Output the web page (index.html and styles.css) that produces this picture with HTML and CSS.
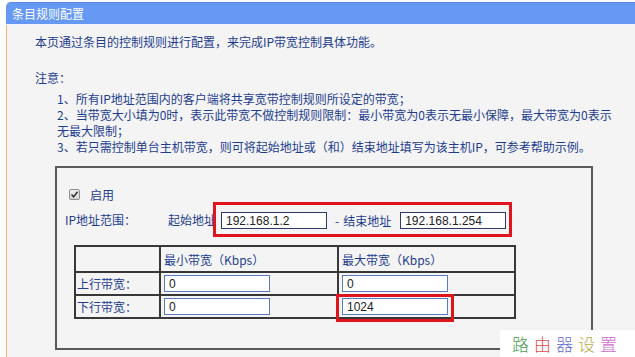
FILE: index.html
```html
<!DOCTYPE html>
<html lang="zh-CN">
<head>
<meta charset="utf-8">
<title>条目规则配置</title>
<link rel="stylesheet" href="styles.css">
</head>
<body>
<div class="titlebar">条目规则配置</div>
<div class="panel">
  <p class="intro">本页通过条目的控制规则进行配置，来完成IP带宽控制具体功能。</p>
  <p class="note-title">注意：</p>
  <ul class="notes">
    <li>1、所有IP地址范围内的客户端将共享宽带控制规则所设定的带宽；</li>
    <li>2、当带宽大小填为0时，表示此带宽不做控制规则限制：最小带宽为0表示无最小保障，最大带宽为0表示<br>无最大限制；</li>
    <li>3、若只需控制单台主机带宽，则可将起始地址或（和）结束地址填写为该主机IP，可参考帮助示例。</li>
  </ul>
  <div class="rulebox">
    <div class="enable">
      <span class="chk"><svg width="9" height="9" viewBox="0 0 9 9"><path d="M1.5 4.5 L3.6 6.8 L7.6 1.8" fill="none" stroke="#333" stroke-width="1.6"/></svg></span>
      <span>启用</span>
    </div>
    <div class="iprow">
      <span class="iplabel">IP地址范围：</span>
      <span class="startlabel">起始地址</span>
      <span class="mark">
        <input class="ipfield" type="text" value="192.168.1.2">
        <span class="dash">-</span>
        <span class="endlabel">结束地址</span>
        <input class="ipfield" type="text" value="192.168.1.254">
      </span>
    </div>
    <table class="bw">
      <tr class="head">
        <td class="c1"></td>
        <td class="c2">最小带宽（Kbps）</td>
        <td class="c3">最大带宽（Kbps）</td>
      </tr>
      <tr>
        <td class="c1">上行带宽：</td>
        <td class="c2"><input class="bwfield" type="text" value="0"></td>
        <td class="c3"><input class="bwfield" type="text" value="0"></td>
      </tr>
      <tr>
        <td class="c1">下行带宽：</td>
        <td class="c2"><input class="bwfield" type="text" value="0"></td>
        <td class="c3"><span class="marked"><input class="bwfield" type="text" value="1024"></span></td>
      </tr>
    </table>
  </div>
  <div class="watermark"><span class="w1">路</span><span class="w2">由</span><span class="w3">器</span><span class="w4">设</span><span class="w5">置</span></div>
</div>
</body>
</html>
```

FILE: styles.css
```css
html, body {
  margin: 0;
  padding: 0;
  background: #ffffff;
  height: 357px;
  overflow: hidden;
}
body {
  font-family: "Noto Sans CJK SC", "Liberation Sans", sans-serif;
  font-size: 12px;
  color: #1e3d8f;
}
.titlebar {
  margin: 2px 0 0 6px;
  height: 23px;
  line-height: 21px;
  padding-left: 6px;
  background: #6699f4;
  border-top: 1px solid #5a8be6;
  border-bottom: 1px solid #eef2fc;
  box-sizing: border-box;
  border-top-left-radius: 5px;
  color: #ffffff;
}
.panel {
  position: relative;
  margin-left: 6px;
  border-left: 1px solid #f5b574;
  background: #f4f4f4;
  height: 332px;
  box-sizing: border-box;
  padding-top: 9px;
  padding-left: 28px;
}
.intro, .note-title {
  margin: 0;
  line-height: 16px;
}
.note-title {
  margin-top: 20px;
}
.notes {
  list-style: none;
  margin: 5px 0 0 0;
  padding-left: 22px;
  line-height: 16px;
}
.notes li {
  white-space: nowrap;
}
.rulebox {
  margin: 11px 0 0 20px;
  width: 538px;
  height: 184px;
  box-sizing: border-box;
  border: 2px solid #5a5a5a;
  padding: 19px 0 0 8px;
}
.enable {
  display: flex;
  align-items: center;
  height: 15px;
  padding-left: 4px;
  gap: 10px;
}
.chk {
  width: 11px;
  height: 11px;
  box-sizing: border-box;
  border: 1px solid #8e8e8e;
  border-radius: 2px;
  background: linear-gradient(#f0f0f0, #d6d6d6);
  display: flex;
  align-items: center;
  justify-content: center;
}
.iprow {
  display: flex;
  align-items: center;
  white-space: nowrap;
}
.iplabel {
  width: 103px;
  flex-shrink: 0;
}
.startlabel {
  width: 45px;
  flex-shrink: 0;
  overflow: visible;
}
.mark {
  display: inline-flex;
  align-items: center;
  flex-shrink: 0;
  border: 3px solid #e0141c;
  padding: 7px 3px 5px 5px;
}
.ipfield {
  width: 106px;
  height: 17px;
  box-sizing: border-box;
  border: 1px solid #2b3a66;
  padding: 0 4px;
  margin: 0;
  font-family: "Liberation Sans", sans-serif;
  font-size: 12px;
  color: #222;
  background: #fff;
  outline: none;
}
.dash {
  margin-left: 8px;
  margin-right: 4px;
}
.endlabel {
  margin-right: 9px;
}
.bw {
  margin: 8px 0 0 9px;
  border-collapse: separate;
  border-spacing: 0;
  border-top: 2px solid #383838;
  border-left: 2px solid #383838;
}
.bw td {
  border-right: 2px solid #383838;
  border-bottom: 2px solid #383838;
  padding: 0 0 0 3px;
  height: 23px;
  box-sizing: border-box;
  white-space: nowrap;
}
.bw tr.head td {
  height: 26px;
}
.bw td.c1 {
  width: 85px;
  padding-left: 1px;
}
.bw td.c2 {
  width: 178px;
}
.bw td.c3 {
  width: 177px;
}
.bwfield {
  width: 106px;
  height: 17px;
  box-sizing: border-box;
  border: 1px solid #5a7bbf;
  padding: 0 4px;
  margin: 0;
  display: block;
  font-family: "Liberation Sans", sans-serif;
  font-size: 12px;
  color: #222;
  background: #fff;
  outline: none;
}
.marked {
  position: relative;
  display: block;
  width: 106px;
}
.marked::after {
  content: "";
  position: absolute;
  left: -6px;
  top: -4px;
  right: -6px;
  bottom: -7px;
  border: 3px solid #e0141c;
}
.watermark {
  position: absolute;
  right: 0;
  bottom: 0;
  width: 135px;
  height: 27px;
  background: #ffffff;
  display: flex;
  align-items: center;
  padding-left: 12px;
  box-sizing: border-box;
  gap: 5px;
  font-size: 17px;
  font-weight: 300;
}
.w1 { color: #4f9a52; }
.w2 { color: #e04a4a; }
.w3 { color: #5f6bd0; }
.w4 { color: #b4ac42; }
.w5 { color: #d36bd0; }
```
